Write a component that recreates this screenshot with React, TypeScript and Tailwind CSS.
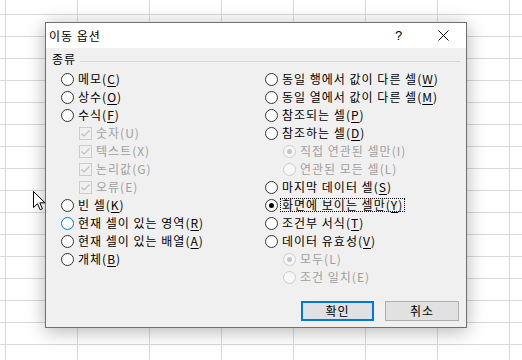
import React from 'react';

type Item = {
  text: string;
  keyChar: string;
  kind: 'radio' | 'check' | 'sub';
  checked?: boolean;
  disabled?: boolean;
  hover?: boolean;
  focus?: boolean;
};

const leftItems: Item[] = [
  { text: '메모', keyChar: 'C', kind: 'radio' },
  { text: '상수', keyChar: 'O', kind: 'radio' },
  { text: '수식', keyChar: 'F', kind: 'radio' },
  { text: '숫자', keyChar: 'U', kind: 'check', checked: true, disabled: true },
  { text: '텍스트', keyChar: 'X', kind: 'check', checked: true, disabled: true },
  { text: '논리값', keyChar: 'G', kind: 'check', checked: true, disabled: true },
  { text: '오류', keyChar: 'E', kind: 'check', checked: true, disabled: true },
  { text: '빈 셀', keyChar: 'K', kind: 'radio' },
  { text: '현재 셀이 있는 영역', keyChar: 'R', kind: 'radio', hover: true },
  { text: '현재 셀이 있는 배열', keyChar: 'A', kind: 'radio' },
  { text: '개체', keyChar: 'B', kind: 'radio' },
];

const rightItems: Item[] = [
  { text: '동일 행에서 값이 다른 셀', keyChar: 'W', kind: 'radio' },
  { text: '동일 열에서 값이 다른 셀', keyChar: 'M', kind: 'radio' },
  { text: '참조되는 셀', keyChar: 'P', kind: 'radio' },
  { text: '참조하는 셀', keyChar: 'D', kind: 'radio' },
  { text: '직접 연관된 셀만', keyChar: 'I', kind: 'sub', checked: true, disabled: true },
  { text: '연관된 모든 셀', keyChar: 'L', kind: 'sub', disabled: true },
  { text: '마지막 데이터 셀', keyChar: 'S', kind: 'radio' },
  { text: '화면에 보이는 셀만', keyChar: 'Y', kind: 'radio', checked: true, focus: true },
  { text: '조건부 서식', keyChar: 'T', kind: 'radio' },
  { text: '데이터 유효성', keyChar: 'V', kind: 'radio' },
  { text: '모두', keyChar: 'L', kind: 'sub', checked: true, disabled: true },
  { text: '조건 일치', keyChar: 'E', kind: 'sub', disabled: true },
];

const Radio = ({ checked, disabled, hover }: { checked?: boolean; disabled?: boolean; hover?: boolean }) => (
  <span
    className={`flex items-center justify-center w-[13px] h-[13px] rounded-full border shrink-0 ${
      disabled ? 'border-[#cccccc] bg-[#f7f7f7]' : hover ? 'border-[#0078d7] bg-white' : 'border-[#333333] bg-white'
    }`}
  >
    {checked && <span className={`w-[5px] h-[5px] rounded-full ${disabled ? 'bg-[#c4c4c4]' : 'bg-black'}`} />}
  </span>
);

const Check = () => (
  <span className="flex items-center justify-center w-[13px] h-[13px] border border-[#cccccc] shrink-0">
    <svg width="11" height="11" viewBox="0 0 11 11">
      <path d="M1.5 5.5 L4 8 L9.5 2.5" fill="none" stroke="#bfbfbf" strokeWidth="1.2" />
    </svg>
  </span>
);

const Row = ({ item }: { item: Item }) => {
  const indent = item.kind !== 'radio' ? 'ml-[18px]' : '';
  const color = item.disabled ? 'text-[#a0a0a0]' : 'text-black';
  const label = (
    <>
      {item.text}(
      {item.disabled ? item.keyChar : <span className="underline underline-offset-[2px]">{item.keyChar}</span>})
    </>
  );
  return (
    <div className={`flex items-center gap-[4px] h-[18px] ${indent}`}>
      {item.kind === 'check' ? (
        <Check />
      ) : (
        <Radio checked={item.checked} disabled={item.disabled} hover={item.hover} />
      )}
      {item.focus ? (
        <span className={`-ml-[2px] px-px border border-dotted border-black leading-[12px] ${color}`}>{label}</span>
      ) : (
        <span className={`leading-[18px] whitespace-nowrap ${color}`}>{label}</span>
      )}
    </div>
  );
};

const Cursor = () => (
  <svg className="absolute left-[33px] top-[191px]" width="13" height="20" viewBox="0 0 13 20">
    <path
      d="M0.5 0.5 L0.5 16.5 L4.5 12.7 L7.2 18.8 L9.4 17.8 L6.8 11.8 L12 11.8 Z"
      fill="white"
      stroke="black"
      strokeWidth="1"
      strokeLinejoin="miter"
    />
  </svg>
);

export default function App() {
  return (
    <div className="relative w-[522px] h-[360px] overflow-hidden bg-white bg-[linear-gradient(to_right,#d9d9d9_1px,transparent_1px),linear-gradient(to_bottom,#d9d9d9_1px,transparent_1px)] bg-size-[72px_22px] bg-position-[5px_14px] pl-[45px] pt-[22px] font-['Noto_Sans_CJK_KR',sans-serif] text-[12px] tracking-[1px]">
      <div className="flex flex-col w-[422px] h-[306px] border border-[#6f6f6f] bg-[#f0f0f0] shadow-[0_3px_18px_rgba(0,0,0,0.3)]">
        <div className="flex items-center h-[25px] bg-white shrink-0">
          <span className="pl-[3px] text-black flex-1">이동 옵션</span>
          <span className="w-[45px] text-center text-black font-['Liberation_Sans',sans-serif] text-[13px] tracking-normal">?</span>
          <span className="flex items-center justify-center w-[45px] h-full">
            <svg width="11" height="11" viewBox="0 0 11 11">
              <path d="M0.5 0.5 L10.5 10.5 M10.5 0.5 L0.5 10.5" stroke="black" strokeWidth="1" />
            </svg>
          </span>
        </div>
        <div className="flex flex-col flex-1 px-[6px] pt-[2px]">
          <div className="flex items-center h-[18px]">
            <span className="text-black">종류</span>
            <span className="flex-1 h-px bg-[#d5d5d5] ml-[4px] mt-[4px]" />
          </div>
          <div className="flex mt-[2px] pl-[9px]">
            <div className="flex flex-col w-[204px]">
              {leftItems.map((it, i) => (
                <Row key={i} item={it} />
              ))}
            </div>
            <div className="flex flex-col">
              {rightItems.map((it, i) => (
                <Row key={i} item={it} />
              ))}
            </div>
          </div>
          <div className="flex justify-end gap-[11px] mt-[15px] pr-px">
            <button className="w-[73px] h-[20px] border-2 border-[#0078d7] bg-[#e1e1e1] text-black leading-[16px]">
              확인
            </button>
            <button className="w-[74px] h-[20px] border border-[#adadad] bg-[#e1e1e1] text-black leading-[18px]">
              취소
            </button>
          </div>
        </div>
      </div>
      <Cursor />
    </div>
  );
}
